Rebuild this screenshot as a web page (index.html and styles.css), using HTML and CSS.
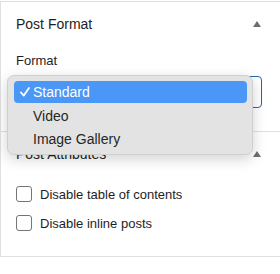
FILE: index.html
```html
<!DOCTYPE html>
<html>
<head>
    <title>Post Settings</title>
    <link rel="stylesheet" href="styles.css">
</head>
<body>
    <div class="panel">
        <section class="section">
            <div class="section-header">
                <span class="section-title">Post Format</span>
                <svg class="toggle" width="8" height="6" viewBox="0 0 8 6"><path d="M4 0 L8 6 L0 6 Z" fill="#6e6e6e"/></svg>
            </div>
            <div class="section-body format-body">
                <div class="field-label">Format</div>
                <div class="select-wrap">
                    <div class="select-box"></div>
                    <!-- open dropdown menu -->
                    <ul class="menu">
                        <li class="menu-item selected">
                            <span class="check">
                                <svg width="10" height="10" viewBox="0 0 10 10"><path d="M1 5.5 L3.8 8.6 L9 1" fill="none" stroke="#fff" stroke-width="1.8" stroke-linecap="round" stroke-linejoin="round"/></svg>
                            </span>Standard
                        </li>
                        <li class="menu-item"><span class="check"></span>Video</li>
                        <li class="menu-item"><span class="check"></span>Image Gallery</li>
                    </ul>
                </div>
            </div>
        </section>
        <section class="section">
            <div class="section-header">
                <span class="section-title">Post Attributes</span>
                <svg class="toggle" width="8" height="6" viewBox="0 0 8 6"><path d="M4 0 L8 6 L0 6 Z" fill="#6e6e6e"/></svg>
            </div>
            <div class="section-body attr-body">
                <label class="check-row"><span class="checkbox"></span>Disable table of contents</label>
                <label class="check-row"><span class="checkbox"></span>Disable inline posts</label>
            </div>
        </section>
    </div>
</body>
</html>
```

FILE: styles.css
```css
body {
    margin: 0;
    background-color: white;
    color: #1e1e1e;
    font-family: "Liberation Sans", Arial, sans-serif;
}

.panel {
    margin-top: 1px;
    border-top: 1px solid #e0e0e0;
    border-left: 1px solid #e0e0e0;
    border-bottom: 1px solid #e0e0e0;
}

.section + .section {
    border-top: 1px solid #e0e0e0;
}

.section-header {
    display: flex;
    justify-content: space-between;
    align-items: center;
    height: 44px;
    padding: 0 18px 0 15px;
}

.section-title {
    font-size: 14px;
}

.toggle {
    display: block;
    margin-right: 1px;
}

.section-body {
    padding: 0 18px 0 15px;
}

.format-body {
    padding-top: 7px;
    padding-bottom: 23px;
}

.field-label {
    font-size: 13px;
    line-height: 16px;
    margin-bottom: 7px;
}

.select-wrap {
    position: relative;
}

.select-box {
    height: 30px;
    border: 1px solid #2a64a6;
    border-radius: 4px;
    background-color: white;
}

.menu {
    position: absolute;
    top: -1px;
    left: -9px;
    width: 233px;
    margin: 0;
    padding: 5px 5px 4px 6px;
    list-style: none;
    background-color: #e3e3e3;
    border: 1px solid #cfcfcf;
    border-radius: 7px;
    box-shadow: 0 4px 14px rgba(0, 0, 0, 0.18);
    font-size: 14px;
}

.menu-item {
    display: flex;
    align-items: center;
    height: 23px;
    padding-left: 6px;
    border-radius: 4px;
    color: #262626;
}

.menu-item.selected {
    height: 22px;
    margin-bottom: 1px;
    background-color: #4a97f8;
    color: white;
}

.check {
    display: flex;
    width: 13px;
}

.attr-body {
    display: flex;
    flex-direction: column;
    gap: 13px;
    padding-top: 10px;
    padding-bottom: 25px;
}

.check-row {
    display: flex;
    align-items: center;
    gap: 8px;
    font-size: 13px;
}

.checkbox {
    width: 14px;
    height: 14px;
    border: 1px solid #757575;
    border-radius: 3px;
}
```
